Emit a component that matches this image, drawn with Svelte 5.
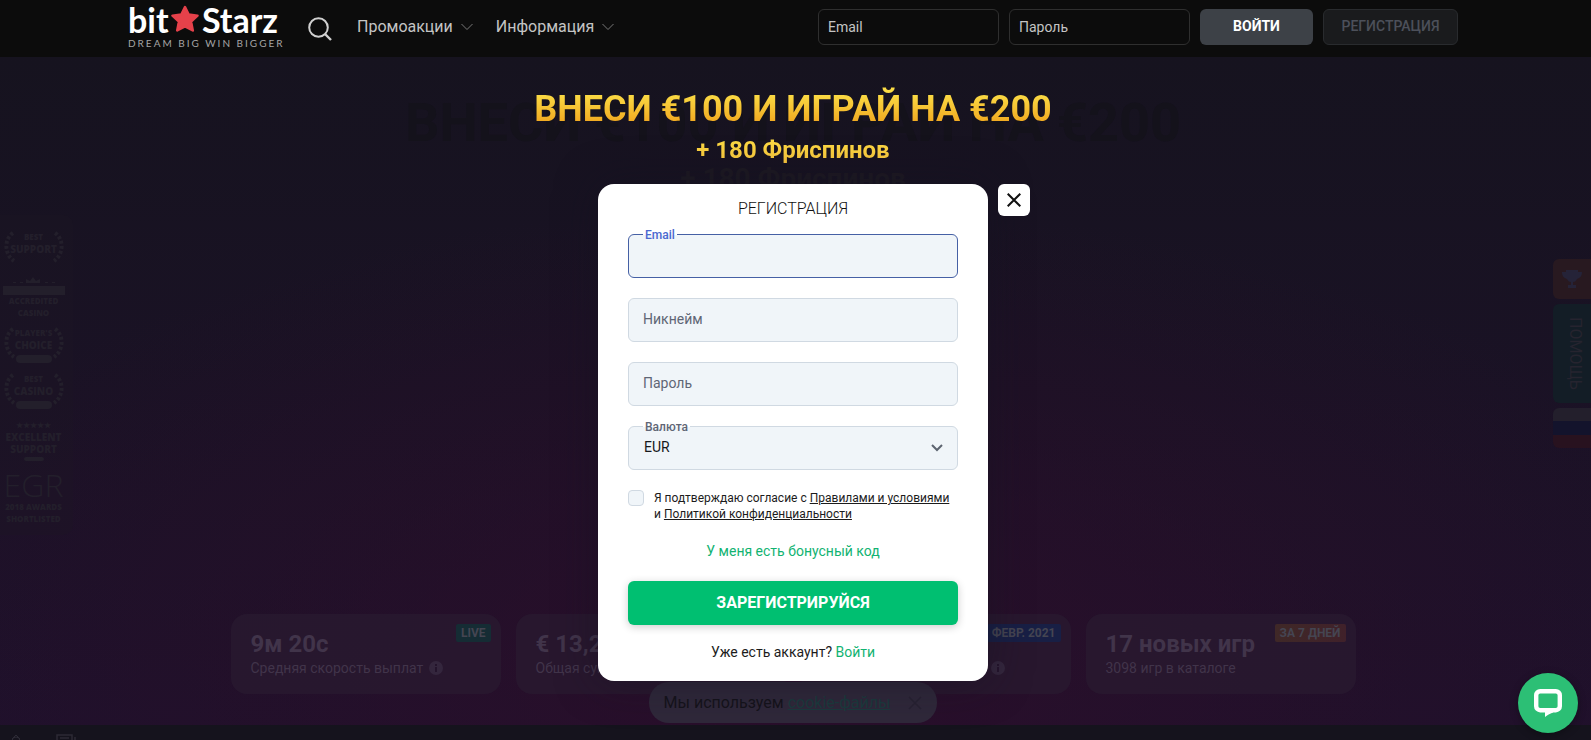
<script lang="ts">
  let email = "";
  let nickname = "";
  let password = "";
  let currency = "EUR";
  let agreed = false;

  const menu = ["Промоакции", "Информация"];

  const stats = [
    { value: "9м 20с", label: "Средняя скорость выплат", badge: "LIVE", tone: "green", info: true },
    { value: "€ 13,2 млн", label: "Общая сумма", badge: "", tone: "", info: false },
    { value: "", label: "", badge: "ФЕВР. 2021", tone: "blue", info: true },
    { value: "17 новых игр", label: "3098 игр в каталоге", badge: "ЗА 7 ДНЕЙ", tone: "orange", info: false },
  ];

  const awards = [
    { top: "BEST", main: "SUPPORT", pill: false },
    { top: "PLAYER'S", main: "CHOICE", pill: true },
    { top: "BEST", main: "CASINO", pill: true },
  ];
</script>

<div class="page">
  <header>
    <div class="bar">
      <a class="logo" href="/">
        <span class="name">
          bit
          <svg width="28" height="28" viewBox="0 0 28 28">
            <path
              d="M14 2l3.700 7.500 8.800 1.200-6.400 6 1.700 8.800-7.800-4.200-7.800 4.200 1.700-8.800-6.400-6 8.800-1.200z"
              fill="#e5414a"
              stroke="#e5414a"
              stroke-width="2.500"
              stroke-linejoin="round"
            />
          </svg>
          Starz
        </span>
        <span class="tagline">DREAM BIG WIN BIGGER</span>
      </a>

      <button class="search" aria-label="Поиск">
        <svg width="24" height="24" viewBox="0 0 24 24" fill="none" stroke="#d0d0d0" stroke-width="2">
          <circle cx="10.5" cy="10.5" r="9.3" />
          <path d="M17 17l6 6" stroke-width="2.4" />
        </svg>
      </button>

      <nav>
        {#each menu as item}
          <a href="/">
            {item}
            <svg width="12" height="8" viewBox="0 0 12 8" fill="none" stroke="#777">
              <path d="M.5 1L6 6.5 11.5 1" />
            </svg>
          </a>
        {/each}
      </nav>

      <form class="login">
        <input type="email" placeholder="Email" aria-label="Email" />
        <input type="password" placeholder="Пароль" aria-label="Пароль" />
        <button type="button" class="enter">ВОЙТИ</button>
        <button type="button" class="register">РЕГИСТРАЦИЯ</button>
      </form>
    </div>
  </header>

  <main>
    <div class="promo">
      <p class="promo-title">ВНЕСИ €100 И ИГРАЙ НА €200</p>
      <p class="promo-sub">+ 180 Фриспинов</p>
    </div>

    <div class="stats">
      {#each stats as stat}
        <div class="stat">
          <strong>{stat.value}</strong>
          <span class="stat-label" class:end={!stat.label}>
            {stat.label}
            {#if stat.info}
              <svg width="14" height="14" viewBox="0 0 14 14">
                <circle cx="7" cy="7" r="7" fill="#34263d" />
                <path d="M7 3v2M7 6v5" stroke="#24142c" stroke-width="2" />
              </svg>
            {/if}
          </span>
          {#if stat.badge}
            <span class="badge {stat.tone}">{stat.badge}</span>
          {/if}
        </div>
      {/each}
    </div>
  </main>

  <footer>
    <svg width="12" height="12" viewBox="0 0 12 12" fill="none" stroke="#2c2a35">
      <circle cx="6" cy="7" r="4" /><path d="M2 5l4-4 4 4" />
    </svg>
    <svg width="20" height="12" viewBox="0 0 20 12" fill="none" stroke="#2c2a35" stroke-width="1.5">
      <path d="M1 12V1h15v11M4 4h9M19 3v9" />
    </svg>
  </footer>

  <aside class="awards">
    {#each awards as award, i}
      <div class="award">
        <svg class="laurel" width="62" height="32" viewBox="0 0 62 32" fill="none" stroke="#231f2b" stroke-width="4" stroke-dasharray="3 2">
          <path d="M10 2C1 8 1 23 11 30M52 2c9 6 9 21-1 28" />
        </svg>
        <small>{award.top}</small>
        <b>{award.main}</b>
        {#if award.pill}<i></i>{/if}
      </div>
      {#if i === 0}
        <div class="award accredited">
          <svg width="62" height="18" viewBox="0 0 62 18" fill="#231f2b">
            <path d="M23 6V2l4 2 3-4 3 4 4-2v4zM10 5h3v1h-3zM17 5h3v1h-3zM42 5h3v1h-3zM49 5h3v1h-3zM0 9h62v9H0z" />
          </svg>
          <small>ACCREDITED</small>
          <small>CASINO</small>
        </div>
      {/if}
    {/each}
    <div class="award excellent">
      <span>★★★★★</span>
      <b>EXCELLENT</b>
      <b>SUPPORT</b>
      <i></i>
    </div>
    <div class="award egr">
      <em>EGR</em>
      <small>2018 AWARDS</small>
      <small>SHORTLISTED</small>
    </div>
  </aside>

  <aside class="tabs">
    <a class="cup" href="/" aria-label="Турниры">
      <svg width="20" height="18" viewBox="0 0 20 18" fill="#252338">
        <path d="M4 0h12v2h4c0 4-2 6-5 7-1 2-2 3-4 3v3h3v3H6v-3h3v-3c-2 0-3-1-4-3C2 8 0 6 0 2h4z" />
      </svg>
    </a>
    <a class="help" href="/">ПОМОЩЬ</a>
    <a class="flag" href="/" aria-label="Русский"><i></i><i></i><i></i></a>
  </aside>

  <div class="cookies">
    <span>Мы используем <a href="/">cookie-файлы</a></span>
    <button aria-label="Закрыть уведомление">
      <svg width="14" height="14" viewBox="0 0 14 14" stroke="#272132" stroke-width="1.5">
        <path d="M1 1l12 12M13 1L1 13" />
      </svg>
    </button>
  </div>

  <div class="overlay">
    <h1>ВНЕСИ €100 И ИГРАЙ НА €200</h1>
    <h2>+ 180 Фриспинов</h2>

    <form class="modal">
      <button type="button" class="close" aria-label="Закрыть">
        <svg width="14" height="14" viewBox="0 0 14 14" stroke="#111" stroke-width="2">
          <path d="M.7.7l12.6 12.6M13.3.7L.7 13.3" />
        </svg>
      </button>

      <h3>РЕГИСТРАЦИЯ</h3>

      <div class="field active">
        <label for="email">Email</label>
        <input id="email" type="email" bind:value={email} />
      </div>
      <div class="field">
        <input type="text" placeholder="Никнейм" aria-label="Никнейм" bind:value={nickname} />
      </div>
      <div class="field">
        <input type="password" placeholder="Пароль" aria-label="Пароль" bind:value={password} />
      </div>
      <div class="field">
        <label for="currency">Валюта</label>
        <select id="currency" bind:value={currency}>
          <option>EUR</option>
          <option>USD</option>
        </select>
        <svg class="arrow" width="12" height="8" viewBox="0 0 12 8" fill="none" stroke="#5d6470" stroke-width="2">
          <path d="M1 1l5 5 5-5" />
        </svg>
      </div>

      <div class="terms">
        <input id="terms" type="checkbox" bind:checked={agreed} />
        <label for="terms">
          Я подтверждаю согласие с <a href="/">Правилами и условиями</a> и
          <a href="/">Политикой конфиденциальности</a>
        </label>
      </div>

      <a class="bonus" href="/">У меня есть бонусный код</a>
      <button type="button" class="submit">ЗАРЕГИСТРИРУЙСЯ</button>
      <p class="have">Уже есть аккаунт? <a href="/">Войти</a></p>
    </form>
  </div>

  <button class="chat" aria-label="Чат">
    <svg width="28" height="28" viewBox="0 0 28 28">
      <rect x="2.200" y="2.200" width="23.600" height="19" rx="4" fill="none" stroke="#fff" stroke-width="4.400" />
      <path d="M11 19v9c2-2 5-3.500 8-4.600V19z" fill="#fff" />
    </svg>
  </button>
</div>

<style>
  :global(body) {
    background: #15131e;
    font-family: Roboto, "Liberation Sans", sans-serif;
  }

  .page {
    position: relative;
    display: flex;
    flex-direction: column;
    height: 100vh;
    overflow: hidden;
  }

  .page * {
    box-sizing: border-box;
  }

  h1,
  h2,
  h3,
  p {
    margin: 0;
  }

  a {
    color: inherit;
    text-decoration: none;
  }

  button,
  input,
  select {
    font-family: inherit;
    margin: 0;
  }

  button {
    border: 0;
    padding: 0;
    background: none;
    cursor: pointer;
  }

  svg {
    display: block;
  }

  header {
    padding-right: 5px;
    background: #0c0c0c;
  }

  .bar {
    display: flex;
    align-items: center;
    max-width: 1330px;
    height: 57px;
    margin: 0 auto;
  }

  .logo {
    display: flex;
    flex-direction: column;
    width: 150px;
    height: 54px;
    font-family: Lato, sans-serif;
  }

  .name {
    display: flex;
    justify-content: space-between;
    align-items: center;
    color: #fff;
    font-size: 34px;
    font-weight: 700;
    line-height: 35px;
  }

  .tagline {
    color: #a5a5a5;
    font-size: 10px;
    line-height: 12px;
    letter-spacing: 2px;
    white-space: nowrap;
  }

  .search {
    margin-left: 30px;
  }

  nav {
    display: flex;
    gap: 23px;
    margin-left: 25px;
    padding-bottom: 4px;
    color: #c4c4c4;
    font-size: 16px;
  }

  nav a {
    display: flex;
    align-items: center;
    gap: 8px;
  }

  .login {
    display: flex;
    gap: 10px;
    margin-left: auto;
    padding-bottom: 3px;
  }

  .login input {
    width: 181px;
    height: 36px;
    padding: 0 9px;
    border: 1px solid #2f2f2f;
    border-radius: 6px;
    background: transparent;
    color: #c4c4c4;
    font-size: 14px;
  }

  .login input::placeholder {
    color: #c4c4c4;
  }

  .login button {
    height: 36px;
    padding-bottom: 2px;
    border-radius: 6px;
    font-size: 14px;
  }

  .enter {
    width: 113px;
    background: #3d4147;
    color: #fff;
    font-weight: 700;
  }

  .login .register {
    width: 135px;
    border: 1px solid #292b2e;
    background: #1a1b1d;
    color: #4c505a;
    font-weight: 500;
  }

  main {
    display: flex;
    flex: 1;
    flex-direction: column;
    justify-content: space-between;
    align-items: center;
    padding: 34px 5px 31px 0;
    background:
      radial-gradient(ellipse 62% 70% at 50% 92%, rgba(46, 14, 43, 0.75), rgba(42, 14, 40, 0.4) 55%, transparent),
      linear-gradient(#16131f, #1a1225 50%, #1e112c);
  }

  .promo {
    color: #14121b;
    font-weight: 700;
    text-align: center;
  }

  .promo-title {
    font-size: 54px;
    line-height: 64px;
  }

  .promo-sub {
    margin-top: 6px;
    color: #1d1922;
    font-size: 28px;
    line-height: 36px;
  }

  .stats {
    display: grid;
    grid-template-columns: repeat(4, 1fr);
    gap: 15px;
    width: 1125px;
    max-width: 100%;
  }

  .stat {
    position: relative;
    display: flex;
    flex-direction: column;
    height: 80px;
    padding: 15px 20px;
    border-radius: 16px;
    background: rgba(41, 27, 49, 0.7);
    color: #41344a;
  }

  .stat strong {
    height: 30px;
    font-size: 24px;
    line-height: 30px;
  }

  .stat-label {
    display: flex;
    align-items: center;
    gap: 6px;
    min-height: 18px;
    font-size: 14px;
    line-height: 18px;
  }

  .stat-label.end {
    justify-content: flex-end;
    padding-right: 46px;
  }

  .badge {
    position: absolute;
    top: 10px;
    right: 10px;
    padding: 0 5px;
    border-radius: 2px;
    color: #454552;
    font-size: 12px;
    font-weight: 700;
    line-height: 18px;
  }

  .green {
    background: #152c34;
  }

  .blue {
    background: #181f45;
  }

  .orange {
    background: linear-gradient(90deg, #3f2827, #40212a);
  }

  footer {
    display: flex;
    gap: 34px;
    height: 15px;
    padding: 9px 10px 0;
    background: #15131d;
  }

  .awards {
    position: absolute;
    top: 215px;
    left: 0;
    display: flex;
    flex-direction: column;
    gap: 8px;
    width: 73px;
    padding: 16px 9px 10px 3px;
    border-radius: 0 10px 10px 0;
    background: rgba(30, 24, 38, 0.3);
    color: #231f2b;
  }

  .award {
    position: relative;
    display: flex;
    flex-direction: column;
    align-items: center;
    height: 38px;
    font-family: "Open Sans", sans-serif;
    font-weight: 800;
    line-height: 12px;
    white-space: nowrap;
  }

  .award small {
    font-size: 8px;
  }

  .award b {
    font-size: 10px;
    font-weight: 800;
  }

  .award i {
    width: 36px;
    height: 8px;
    margin-top: 4px;
    border-radius: 4px;
    background: #231f2b;
  }

  .laurel {
    position: absolute;
    top: 0;
    left: 0;
  }

  .award.accredited,
  .award.excellent {
    height: 42px;
  }

  .excellent span {
    font-size: 8px;
  }

  .award.excellent i {
    width: 20px;
    height: 6px;
    margin-top: 2px;
  }

  .award.egr {
    height: 56px;
  }

  .egr em {
    font-size: 32px;
    font-style: normal;
    font-weight: 300;
    line-height: 32px;
  }

  .tabs {
    position: absolute;
    top: 259px;
    right: 0;
    display: flex;
    flex-direction: column;
    gap: 5px;
    width: 38px;
  }

  .tabs a {
    display: flex;
    align-items: center;
    justify-content: center;
    height: 40px;
    border-radius: 6px 0 0 6px;
    overflow: hidden;
  }

  .tabs .cup {
    background: #281920;
  }

  .tabs .help {
    height: 99px;
    padding-left: 6px;
    background: #131d26;
    color: #26242f;
    font-size: 16px;
    writing-mode: vertical-rl;
  }

  .tabs .flag {
    flex-direction: column;
  }

  .flag i {
    flex: 1;
    width: 100%;
    background: #231f2c;
  }

  .flag i:nth-child(2) {
    background: #13132c;
  }

  .flag i:nth-child(3) {
    background: #28121f;
  }

  .cookies {
    position: absolute;
    right: 5px;
    bottom: 17px;
    left: 0;
    display: flex;
    align-items: center;
    gap: 18px;
    width: fit-content;
    height: 41px;
    margin: 0 auto;
    padding: 0 15px;
    border-radius: 20px;
    background: #2f283a;
    color: #15131b;
    font-size: 16px;
    white-space: nowrap;
  }

  .cookies a {
    color: #1b3a3d;
    text-decoration: underline;
  }

  .overlay {
    position: absolute;
    inset: 0;
    display: flex;
    flex-direction: column;
    align-items: center;
    padding: 87px 5px 0 0;
    pointer-events: none;
  }

  h1,
  h2 {
    background: linear-gradient(#fbdc45 15%, #f0a51e 85%);
    background-clip: text;
    color: transparent;
    font-weight: 700;
  }

  h1 {
    font-size: 36px;
    line-height: 44px;
  }

  h2 {
    margin: 5px 0 20px;
    background-image: linear-gradient(#fbdc45, #fcc73c);
    font-size: 24px;
    line-height: 28px;
  }

  .modal {
    position: relative;
    display: flex;
    flex-direction: column;
    width: 390px;
    padding: 13px 30px 20px;
    border-radius: 16px;
    background: #fff;
    box-shadow: 0 0 40px rgba(20, 18, 32, 0.5);
    pointer-events: auto;
  }

  .close {
    position: absolute;
    top: 0;
    right: -42px;
    display: grid;
    place-content: center;
    width: 32px;
    height: 32px;
    border-radius: 6px;
    background: #fff;
  }

  h3 {
    margin-bottom: 13px;
    color: #111;
    font-size: 16px;
    font-weight: 300;
    line-height: 24px;
    text-align: center;
  }

  .field {
    position: relative;
    margin-bottom: 20px;
  }

  .field input,
  .field select {
    display: block;
    width: 100%;
    height: 44px;
    padding: 0 14px 2px;
    border: 1px solid #d0d9e2;
    border-radius: 6px;
    outline: 0;
    appearance: none;
    background: #f0f5f9;
    color: #16181c;
    font-size: 14px;
  }

  .field select {
    padding-left: 15px;
  }

  .field input::placeholder {
    color: #5f6675;
  }

  .field.active input {
    border-color: #4560a5;
  }

  .field label {
    position: absolute;
    top: -6px;
    left: 15px;
    padding: 0 2px;
    background: linear-gradient(#fff 50%, #f0f5f9 50%);
    color: #5f6675;
    font-size: 12px;
    font-weight: 500;
    line-height: 14px;
  }

  .field.active label {
    color: #4a68d0;
  }

  .arrow {
    position: absolute;
    top: 18px;
    right: 15px;
    pointer-events: none;
  }

  .terms {
    display: flex;
    gap: 10px;
    margin-bottom: 20px;
    color: #1c1c1c;
    font-size: 12px;
    line-height: 16px;
  }

  .terms input {
    flex: none;
    width: 16px;
    height: 16px;
    border: 1px solid #d0d9e2;
    border-radius: 4px;
    appearance: none;
    background: #f0f5f9;
  }

  .terms input:checked {
    background: #00bf71;
  }

  .terms a {
    text-decoration: underline;
  }

  .bonus {
    align-self: center;
    color: #12b372;
    font-size: 14px;
    line-height: 19px;
  }

  .submit {
    height: 44px;
    margin: 20px 0 18px;
    padding-bottom: 2px;
    border-radius: 6px;
    background: #00bf71;
    box-shadow: 0 2px 8px rgba(0, 0, 0, 0.2);
    color: #fff;
    font-size: 16px;
    font-weight: 700;
  }

  .have {
    color: #1c1c1c;
    font-size: 14px;
    line-height: 18px;
    text-align: center;
  }

  .have a {
    color: #12b372;
  }

  .chat {
    position: absolute;
    right: 13px;
    bottom: 7px;
    display: grid;
    place-content: center;
    width: 60px;
    height: 60px;
    border-radius: 50%;
    background: #2cbf75;
    box-shadow: 0 2px 8px rgba(0, 0, 0, 0.3);
  }
</style>
